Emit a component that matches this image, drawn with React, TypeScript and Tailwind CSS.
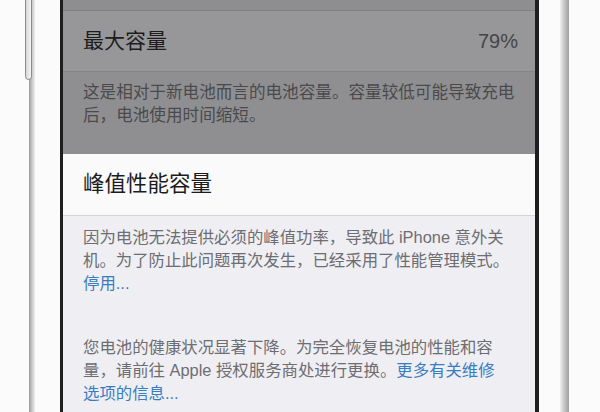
import React from "react";

const font = { fontFamily: '"Liberation Sans", "Noto Sans CJK SC", sans-serif' };

export default function App() {
  return (
    <div className="w-[600px] h-[412px] flex bg-white overflow-hidden" style={font}>
      {/* left bezel */}
      <div className="relative w-[60px] h-full bg-[#fbfbfb] flex">
        <div className="ml-[29px] w-[6px] h-full bg-gradient-to-r from-[#9a9a9c] via-[#c8c8ca] to-[#eeeeee]" />
        <div className="absolute left-[25px] top-[-12px] w-[7px] h-[92px] rounded-full border border-[#8a8a8c] bg-gradient-to-r from-[#d8d8da] to-[#f4f4f4]" />
      </div>
      <div className="w-[3px] h-full bg-[#1e1f21]" />
      {/* screen */}
      <div className="w-[472px] h-full flex flex-col">
        <div className="h-[11px] bg-[#8e8e90] border-b border-[#808082]" />
        <div className="h-[61px] bg-[#979799] border-b border-[#858587] flex items-center justify-between pl-[20px] pr-[17px]">
          <span className="text-[21px] text-[#1d1d1f]">最大容量</span>
          <span className="text-[20px] text-[#454547]">79%</span>
        </div>
        <div className="h-[82px] bg-[#8f8f91] pl-[20px] pt-[9px] text-[16.6px] leading-[23px] text-[#4a4a4c]">
          <div className="whitespace-nowrap">这是相对于新电池而言的电池容量。容量较低可能导致充电</div>
          <div className="whitespace-nowrap">后，电池使用时间缩短。</div>
        </div>
        <div className="h-[62px] bg-[#fafafa] border-b border-[#d4d4d8] flex items-center pl-[20px]">
          <span className="text-[21.5px] text-[#1c1c1e]">峰值性能容量</span>
        </div>
        <div className="flex-1 bg-[#efeff3] pl-[20px] pt-[10px] text-[16.4px] leading-[23px] text-[#6d6d72]">
          <div className="whitespace-nowrap">因为电池无法提供必须的峰值功率，导致此 iPhone 意外关</div>
          <div className="whitespace-nowrap">机。为了防止此问题再次发生，已经采用了性能管理模式。</div>
          <div className="whitespace-nowrap text-[#3a7cc2]">停用...</div>
          <div className="h-[41px]" />
          <div className="whitespace-nowrap">您电池的健康状况显著下降。为完全恢复电池的性能和容</div>
          <div className="whitespace-nowrap">
            量，请前往 Apple 授权服务商处进行更换。<span className="text-[#3a7cc2]">更多有关维修</span>
          </div>
          <div className="whitespace-nowrap text-[#3a7cc2]">选项的信息...</div>
        </div>
      </div>
      <div className="w-[4px] h-full bg-[#1e1f21]" />
      {/* right bezel */}
      <div className="flex-1 h-full bg-[#fbfbfb] flex">
        <div className="ml-[21px] w-[9px] h-full bg-gradient-to-r from-[#f0f0f0] via-[#c4c4c6] to-[#a0a0a2]" />
      </div>
    </div>
  );
}
